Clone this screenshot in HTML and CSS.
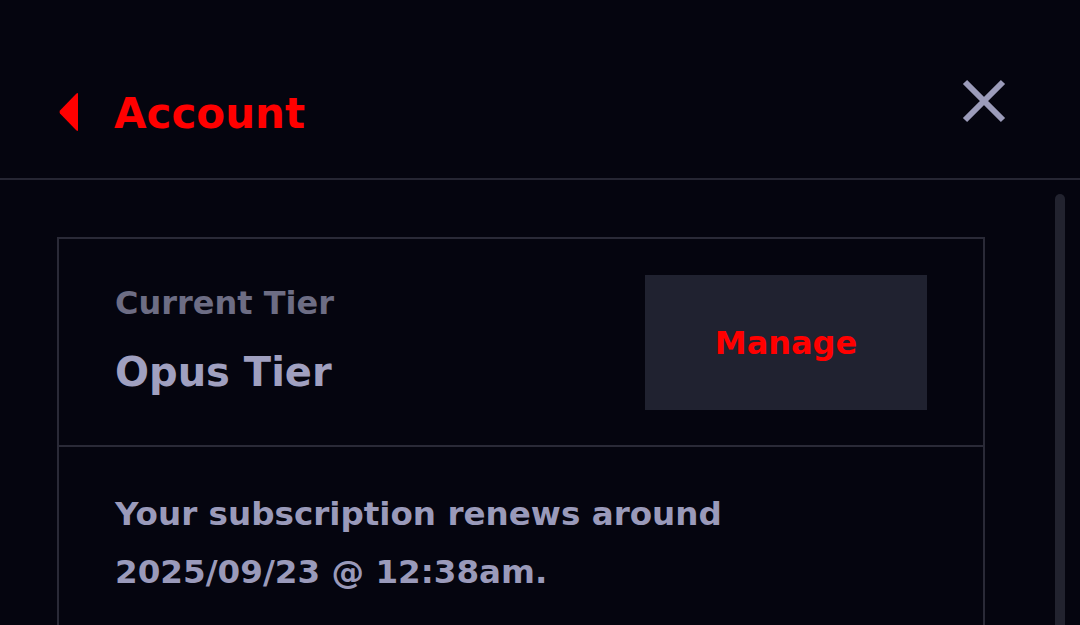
FILE: index.html
```html
<!DOCTYPE html>
<html>
<head>
<meta charset="utf-8">
<link rel="stylesheet" href="styles.css">
</head>
<body>
<div class="screen">
  <header class="topbar">
    <div class="back">
      <svg class="back-icon" width="22" height="40" viewBox="0 0 22 40"><path d="M20 2 L20 38 Q20 40 18 38 L2 21.5 Q1 20 2 18.5 L18 2 Q20 0 20 2 Z" fill="#ff0000"/></svg>
      <span class="title">Account</span>
    </div>
    <svg class="close" width="44" height="44" viewBox="0 0 44 44"><path d="M3 3 L41 41 M41 3 L3 41" stroke="#9c9cba" stroke-width="6"/></svg>
  </header>
  <div class="body-row">
    <main class="content">
      <section class="card">
        <div class="tier-row">
          <div class="tier-info">
            <div class="tier-label">Current Tier</div>
            <div class="tier-name">Opus Tier</div>
          </div>
          <button class="manage">Manage</button>
        </div>
        <div class="renew">Your subscription renews around<br>2025/09/23 @ 12:38am.</div>
      </section>
    </main>
    <div class="scrolltrack"><div class="thumb"></div></div>
  </div>
</div>
</body>
</html>
```
FILE: styles.css
```css
html, body {
  margin: 0;
  padding: 0;
  background: #05050f;
  overflow: hidden;
}
.screen {
  width: 1080px;
  height: 625px;
  display: flex;
  flex-direction: column;
  font-family: "DejaVu Sans", "Verdana", sans-serif;
  font-weight: 700;
}
.topbar {
  height: 178px;
  border-bottom: 2px solid #262633;
  display: flex;
  align-items: center;
  justify-content: space-between;
  padding: 0 74px 0 58px;
  box-sizing: content-box;
}
.back {
  display: flex;
  align-items: center;
  gap: 34px;
  margin-top: 46px;
}
.back-icon {
  display: block;
}
.title {
  color: #ff0000;
  font-size: 42px;
  line-height: 1;
  padding-top: 4px;
}
.close {
  display: block;
  margin-top: 24px;
}
.body-row {
  display: flex;
  flex: 1;
  min-height: 0;
}
.content {
  flex: 1;
  padding: 57px 0 0 57px;
}
.card {
  width: 928px;
  box-sizing: border-box;
  border: 2px solid #2a2a37;
  border-bottom: none;
  height: 420px;
}
.tier-row {
  display: flex;
  justify-content: space-between;
  align-items: flex-start;
  padding: 36px 56px 35px 56px;
  border-bottom: 2px solid #2a2a37;
}
.tier-info {
  padding-top: 12px;
}
.tier-label {
  color: #6d6d84;
  font-size: 32px;
  line-height: 1;
}
.tier-name {
  color: #a0a0c0;
  font-size: 40px;
  line-height: 1;
  margin-top: 33px;
}
.manage {
  width: 282px;
  height: 135px;
  background: #202230;
  border: none;
  color: #ff0000;
  font-family: "DejaVu Sans", "Verdana", sans-serif;
  font-weight: 700;
  font-size: 32px;
  padding: 0;
}
.renew {
  padding: 38px 56px 0 56px;
  color: #9a9aba;
  font-size: 32.6px;
  line-height: 58px;
}
.scrolltrack {
  width: 10px;
  margin: 14px 15px 0 0;
}
.thumb {
  width: 10px;
  height: 600px;
  border-radius: 5px;
  background: #22232f;
}
```
